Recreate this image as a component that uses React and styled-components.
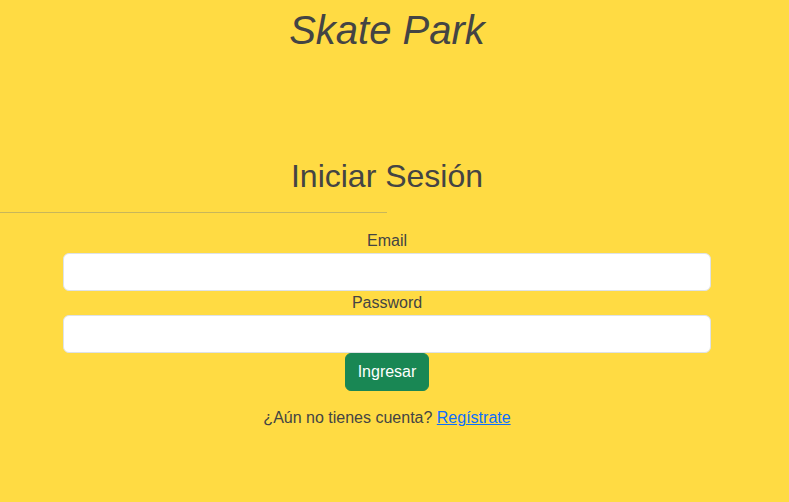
import React from 'react';
import styled, { createGlobalStyle } from 'styled-components';

const GlobalStyle = createGlobalStyle`
	html, body {
		margin: 0;
		padding: 0;
		background-color: #ffdb43;
		font-family: "Liberation Sans", Arial, sans-serif;
		color: #444;
	}
`;

const Page = styled.div`
	width: 774px;
	min-height: 502px;
	display: flex;
	flex-direction: column;
	align-items: center;
`;

const Title = styled.h1`
	margin: 7px 0 0;
	font-size: 40px;
	font-weight: 400;
	font-style: italic;
	line-height: 46px;
`;

const Heading = styled.h2`
	margin: 105px 0 0;
	font-size: 32px;
	font-weight: 400;
	line-height: 37px;
`;

const Rule = styled.hr`
	align-self: flex-start;
	width: 50%;
	margin: 17px 0 0;
	border: none;
	border-top: 1px solid #c8b65a;
`;

const Form = styled.form`
	width: 648px;
	margin-top: 16px;
	display: flex;
	flex-direction: column;
	align-items: center;
`;

const Label = styled.label`
	font-size: 16px;
	line-height: 24px;
`;

const Input = styled.input`
	box-sizing: border-box;
	width: 100%;
	height: 38px;
	background: #fff;
	border: 1px solid #dee2e6;
	border-radius: 6px;
	font-size: 16px;
	padding: 6px 12px;
`;

const Button = styled.button`
	height: 38px;
	padding: 0 12px;
	background-color: #198754;
	color: #fff;
	border: 1px solid #198754;
	border-radius: 6px;
	font-family: inherit;
	font-size: 16px;
`;

const Footer = styled.p`
	margin: 16px 0 0;
	font-size: 16px;
	line-height: 22px;

	a {
		color: #0d6efd;
		text-decoration: underline;
	}
`;

const App = () => {
	return (
		<Page>
			<GlobalStyle />
			<Title>Skate Park</Title>
			<Heading>Iniciar Sesión</Heading>
			<Rule />
			<Form onSubmit={(e) => e.preventDefault()}>
				<Label htmlFor="email">Email</Label>
				<Input id="email" type="email" />
				<Label htmlFor="password">Password</Label>
				<Input id="password" type="password" />
				<Button type="submit">Ingresar</Button>
				<Footer>¿Aún no tienes cuenta? <a href="#">Regístrate</a></Footer>
			</Form>
		</Page>
	);
};

export default App;
